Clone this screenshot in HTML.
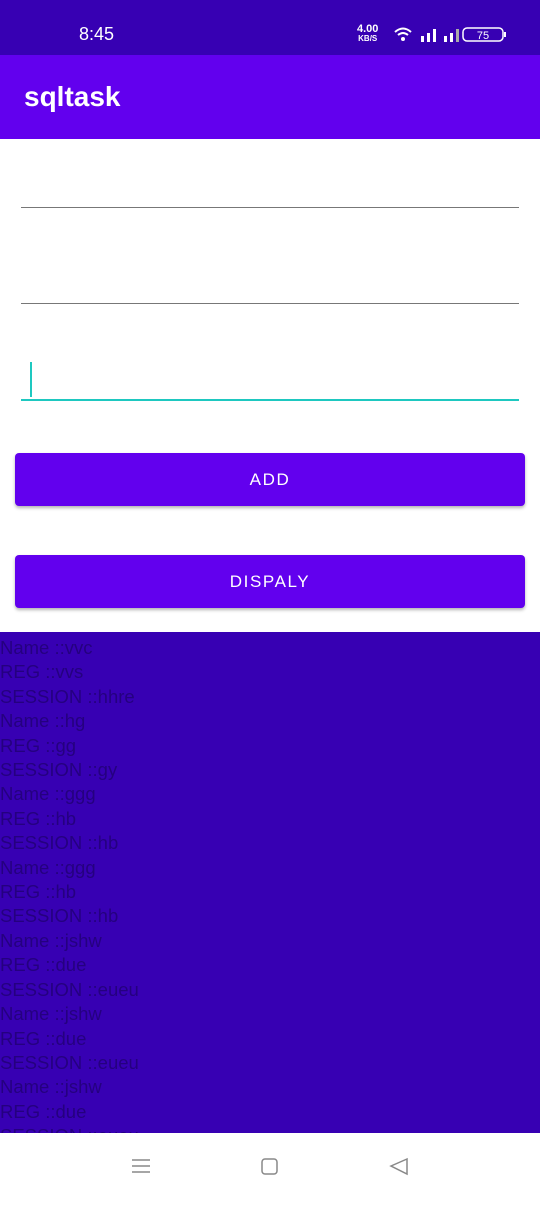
<!DOCTYPE html><html><head><style>
body{margin:0;width:540px;height:1200px;position:relative;background:#fff;font-family:"Liberation Sans",sans-serif;overflow:hidden}
.sb{position:absolute;top:0;left:0;width:540px;height:55px;background:#3700b3;color:#fff}
.ab{position:absolute;top:55px;left:0;width:540px;height:84px;background:#6200ee;color:#fff;font-size:28px;font-weight:bold}
.line{position:absolute;left:21px;width:498px;height:1px;background:#777}
.btn{position:absolute;left:15px;width:510px;height:53px;background:#6200ee;border-radius:4px;color:#fff;font-size:17px;font-weight:normal;letter-spacing:1.6px;text-align:center;line-height:54px;box-shadow:0 2px 3px rgba(0,0,0,.3)}
.list{position:absolute;top:632px;left:0;width:540px;height:501px;background:#3700b3;color:#25007f;font-size:18.5px;line-height:24.4px;overflow:hidden;padding-top:4px;box-sizing:border-box}
.nav{position:absolute;top:1133px;left:0;width:540px;height:67px;background:#fff}
</style></head><body>
<div class="sb"><span style="position:absolute;left:79px;top:24px;font-size:18px">8:45</span>
<span style="position:absolute;left:357px;top:25px;font-size:11px;font-weight:bold;line-height:9px;text-align:center">4.00<br><span style="font-size:8px">KB/S</span></span>
<svg style="position:absolute;left:393px;top:25px" width="120" height="20"><path d="M2 7 Q10 0 18 7 M5 10 Q10 6 15 10" stroke="#fff" stroke-width="2" fill="none"/><circle cx="10" cy="14" r="2" fill="#fff"/>
<rect x="28" y="11" width="3" height="6" fill="#fff"/><rect x="34" y="8" width="3" height="9" fill="#fff"/><rect x="40" y="4" width="3" height="13" fill="#fff"/>
<rect x="51" y="11" width="3" height="6" fill="#fff"/><rect x="57" y="8" width="3" height="9" fill="#fff"/><rect x="63" y="4" width="3" height="13" fill="#aaa"/>
<rect x="70" y="3" width="40" height="13" rx="4" stroke="#fff" fill="none" stroke-width="1.5"/><rect x="111" y="7" width="2" height="5" fill="#fff"/><text x="90" y="14" font-size="11" fill="#fff" text-anchor="middle" font-family="Liberation Sans">75</text></svg></div>
<div class="ab"><span style="position:absolute;left:24px;top:26px">sqltask</span></div>
<div class="line" style="top:207px"></div>
<div class="line" style="top:303px"></div>
<div class="line" style="top:399px;height:2px;background:#1ec8c0"></div>
<div style="position:absolute;left:30px;top:362px;width:2px;height:35px;background:#1ec8c0"></div>
<div class="btn" style="top:453px">ADD</div>
<div class="btn" style="top:555px">DISPALY</div>
<div class="list">Name ::vvc<br>REG ::vvs<br>SESSION ::hhre<br>Name ::hg<br>REG ::gg<br>SESSION ::gy<br>Name ::ggg<br>REG ::hb<br>SESSION ::hb<br>Name ::ggg<br>REG ::hb<br>SESSION ::hb<br>Name ::jshw<br>REG ::due<br>SESSION ::eueu<br>Name ::jshw<br>REG ::due<br>SESSION ::eueu<br>Name ::jshw<br>REG ::due<br>SESSION ::eueu</div>
<div class="nav"><svg width="540" height="67"><path d="M132 27h18M132 33h18M132 39h18" stroke="#888" stroke-width="1.5"/><rect x="262" y="26" width="15" height="15" rx="3" stroke="#888" stroke-width="1.5" fill="none"/><path d="M407 26 L391 33 L407 41 Z" stroke="#888" stroke-width="1.5" fill="none"/></svg></div>
</body></html>
